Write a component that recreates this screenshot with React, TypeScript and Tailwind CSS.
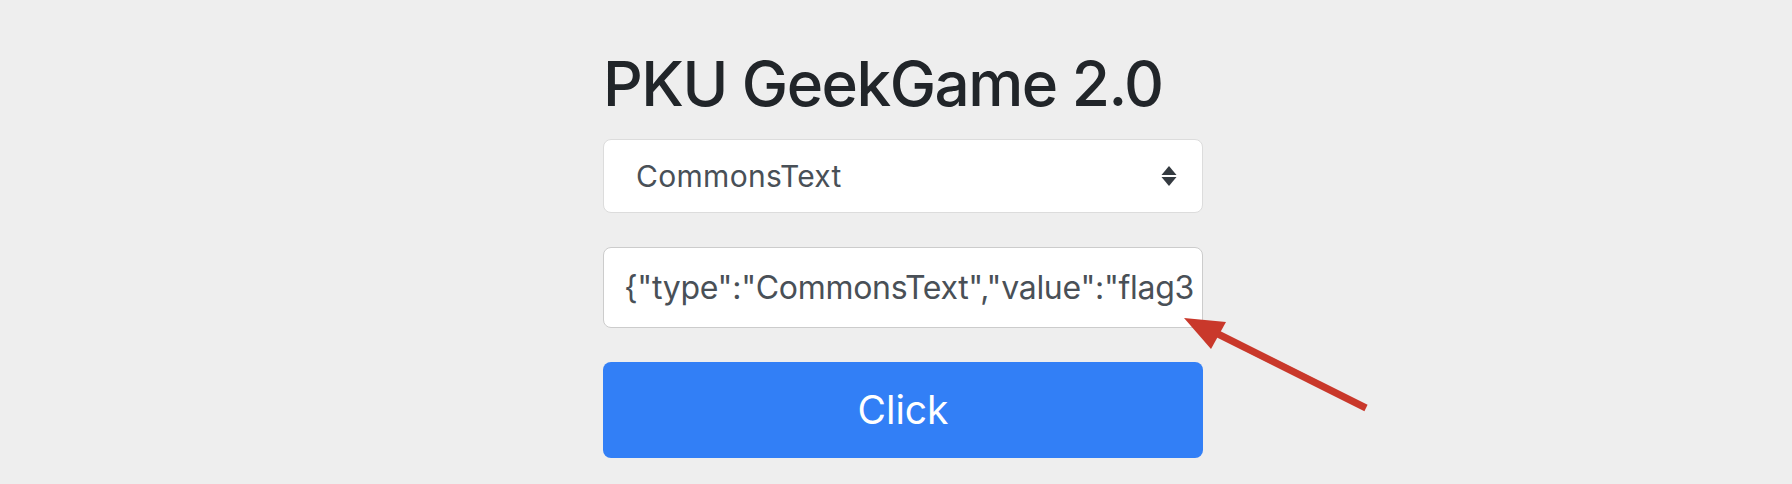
import React from "react";

export default function App() {
  return (
    <div
      className="relative min-h-screen w-full overflow-hidden bg-[#eeeeee]"
      style={{ fontFamily: "Inter, 'Noto Sans', sans-serif" }}
    >
      <div className="ml-[603px] flex w-[600px] flex-col pt-[47px]">
        <h1 className="m-0 text-[62px] font-medium leading-[74px] tracking-[-1.5px] text-[#212529]">
          PKU GeekGame 2.0
        </h1>
        <div className="mt-[18px] flex h-[74px] items-center justify-between rounded-[8px] border border-[#dcdcdc] bg-white pl-[32px] pr-[25px]">
          <span className="text-[30px] tracking-[0.3px] text-[#495057]">CommonsText</span>
          <svg width="16" height="21" viewBox="0 0 16 21">
            <path d="M8 0 L15.5 9 L0.5 9 Z" fill="#343a40" />
            <path d="M0.5 11 L15.5 11 L8 20 Z" fill="#343a40" />
          </svg>
        </div>
        <div className="mt-[34px] flex h-[81px] items-center overflow-hidden whitespace-nowrap rounded-[8px] border border-[#cccccc] bg-white px-[20px]">
          <span className="text-[32px] tracking-[-0.3px] text-[#495057]">
            {'{"type":"CommonsText","value":"flag3'}
          </span>
        </div>
        <button className="mt-[34px] flex h-[96px] items-center justify-center rounded-[8px] bg-[#327ff6] text-[39px] text-white">
          Click
        </button>
      </div>
      <svg
        className="absolute left-0 top-0"
        width="1792"
        height="484"
        viewBox="0 0 1792 484"
      >
        <line x1="1366" y1="408" x2="1210" y2="330" stroke="#c9382b" strokeWidth="7" />
        <path d="M1184 318 L1226 322 L1211 349 Z" fill="#c9382b" />
      </svg>
    </div>
  );
}
